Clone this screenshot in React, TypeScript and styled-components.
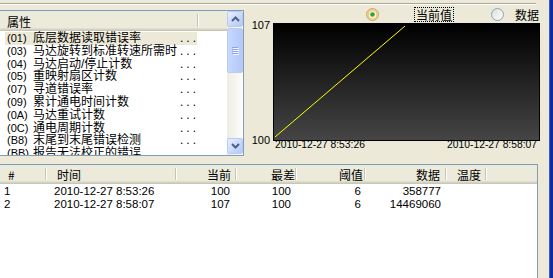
import React from 'react'
import styled, { createGlobalStyle } from 'styled-components'

const GlobalStyle = createGlobalStyle`
  html, body {
    margin: 0;
    padding: 0;
    background: #ece9d8;
  }

  body {
    font-family: "Noto Sans CJK SC", "Liberation Sans", sans-serif;
    font-size: 12px;
    color: #000;
  }
`

const CJK = '"Noto Sans CJK SC", "Liberation Sans", sans-serif'
const MIXED = '"Liberation Sans", "Noto Sans CJK SC", sans-serif'
const LATIN = '"Liberation Sans", Arial, sans-serif'

const properties = [
  { code: '(01)', name: '底层数据读取错误率' },
  { code: '(03)', name: '马达旋转到标准转速所需时' },
  { code: '(04)', name: '马达启动/停止计数' },
  { code: '(05)', name: '重映射扇区计数' },
  { code: '(07)', name: '寻道错误率' },
  { code: '(09)', name: '累计通电时间计数' },
  { code: '(0A)', name: '马达重试计数' },
  { code: '(0C)', name: '通电周期计数' },
  { code: '(B8)', name: '末尾到末尾错误检测' },
  { code: '(BB)', name: '报告无法校正的错误' },
]

const columns = [
  { title: '#', align: 'left', headPad: 8, cellPad: 4 },
  { title: '时间', align: 'left', headPad: 10, cellPad: 7 },
  { title: '当前', align: 'right', headPad: 6, cellPad: 7 },
  { title: '最差', align: 'right', headPad: 2, cellPad: 6 },
  { title: '阈值', align: 'right', headPad: 3, cellPad: 5 },
  { title: '数据', align: 'right', headPad: 7, cellPad: 6 },
  { title: '温度', align: 'left', headPad: 10, cellPad: 6 },
] as const

const colWidths = [47, 130, 60, 60, 69, 81, 40]

const records = [
  ['1', '2010-12-27 8:53:26', '100', '100', '6', '358777', ''],
  ['2', '2010-12-27 8:58:07', '107', '100', '6', '14469060', ''],
]

const Window = styled.div`
  width: 553px;
  height: 278px;
  overflow: hidden;
  display: grid;
  grid-template-columns: 549px 4px;
  background: #ece9d8;
`

const Body = styled.div`
  display: flex;
  flex-direction: column;
  padding-top: 3px;
  padding-right: 9px;
  min-width: 0;
`

const EdgeBar = styled.div`
  background: #0b2e9e;
  border-left: 1px solid #3a5fc8;
`

const Etch = styled.div`
  width: 536px;
  height: 0;
  border-top: 1px solid #aca899;
  border-bottom: 1px solid #ffffff;
`

const TopArea = styled.div`
  display: flex;
  gap: 6px;
  height: 152px;
`

/* ---------- property list ---------- */

const ListBox = styled.div`
  box-sizing: border-box;
  margin-top: 5px;
  width: 244px;
  height: 146px;
  border: 1px solid #7f9db9;
  border-left: none;
  background: #fff;
  display: grid;
  grid-template-columns: 1fr 16px;
  overflow: hidden;
`

const ListPane = styled.div`
  overflow: hidden;
  min-width: 0;
`

const HeaderBar = styled.div<{ $height: number }>`
  display: flex;
  height: ${p => p.$height}px;
  box-sizing: border-box;
  padding-top: 1px;
  background: linear-gradient(
    #ebeadb 0,
    #ebeadb calc(100% - 3px),
    #e2decd calc(100% - 3px),
    #e2decd calc(100% - 2px),
    #d6d2c2 calc(100% - 2px),
    #d6d2c2 calc(100% - 1px),
    #cbc7b8 calc(100% - 1px)
  );
  font-family: ${CJK};
  font-size: 12px;
`

const HeadCell = styled.div<{ $width: number; $align: string; $pad: number }>`
  position: relative;
  box-sizing: border-box;
  width: ${p => p.$width}px;
  flex: none;
  display: flex;
  align-items: center;
  justify-content: ${p => (p.$align === 'right' ? 'flex-end' : 'flex-start')};
  padding-left: ${p => (p.$align === 'left' ? p.$pad : 0)}px;
  padding-right: ${p => (p.$align === 'right' ? p.$pad : 0)}px;
  line-height: 14px;
  white-space: nowrap;

  &::after {
    content: '';
    position: absolute;
    right: 1px;
    top: 2px;
    bottom: 4px;
    width: 1px;
    background: #c7c5b2;
    box-shadow: 1px 0 0 #ffffff;
  }
`

const PropRows = styled.div`
  padding-top: 1px;
`

const PropRow = styled.div<{ $selected?: boolean }>`
  margin-left: 5px;
  width: 192px;
  height: 12.8px;
  box-sizing: border-box;
  padding-left: 2px;
  display: grid;
  grid-template-columns: 26px 145px 1fr;
  align-items: center;
  background: ${p => (p.$selected ? '#ece9d8' : 'transparent')};
  font-family: ${MIXED};
  font-size: 12px;
  line-height: 12.8px;
  white-space: nowrap;
`

const PropCode = styled.span`
  font-size: 11px;
`

const PropName = styled.span``

const PropDots = styled.span`
  padding-left: 2px;
  letter-spacing: 3px;
`

/* ---------- XP scrollbar ---------- */

const ScrollBar = styled.div`
  display: flex;
  flex-direction: column;
  background: linear-gradient(to right, #eeede5, #fdfdfa);
`

const ScrollButton = styled.div`
  box-sizing: border-box;
  height: 16px;
  margin: 0 0 1px;
  border: 1px solid #b9cbf3;
  border-radius: 2px;
  background: linear-gradient(135deg, #e8efff 0%, #c7d7fb 60%, #b4c8f6 100%);
  display: flex;
  align-items: center;
  justify-content: center;
`

const ScrollThumb = styled.div`
  box-sizing: border-box;
  height: 45px;
  border: 1px solid #b9cbf3;
  border-radius: 2px;
  background: linear-gradient(to right, #c9d8fc, #bcd0fb 50%, #b5c9f7);
  display: flex;
  align-items: center;
  justify-content: center;
`

const ScrollTrack = styled.div`
  flex: 1;
`

function Chevron({ up }: { up?: boolean }) {
  return (
    <svg width="9" height="6" viewBox="0 0 9 6">
      <path
        d={up ? 'M1 5 L4.5 1.5 L8 5' : 'M1 1 L4.5 4.5 L8 1'}
        fill="none"
        stroke="#4d6185"
        strokeWidth="2"
      />
    </svg>
  )
}

function Grip() {
  return (
    <svg width="7" height="8" viewBox="0 0 7 8">
      {[0, 2, 4, 6].map(y => (
        <g key={y}>
          <rect x="0" y={y} width="6" height="1" fill="#8ea6e2" />
          <rect x="1" y={y + 1} width="6" height="1" fill="#eef3ff" />
        </g>
      ))}
    </svg>
  )
}

/* ---------- chart ---------- */

const ChartPanel = styled.div`
  width: 290px;
  flex: none;
  display: flex;
  flex-direction: column;
`

const RadioRow = styled.div`
  height: 18px;
  display: flex;
  align-items: center;
  padding-left: 116px;
  font-family: ${CJK};
  font-size: 12px;
`

const RadioOption = styled.label<{ $gap: number; $after?: number }>`
  display: flex;
  align-items: center;
  gap: ${p => p.$gap}px;
  margin-right: ${p => p.$after ?? 0}px;
  line-height: 13px;
`

const RadioText = styled.span<{ $focused?: boolean }>`
  padding: 0 1px;
  outline: ${p => (p.$focused ? '1px dotted #000' : 'none')};
`

function RadioDot({ checked }: { checked?: boolean }) {
  const id = checked ? 'radioOn' : 'radioOff'
  return (
    <svg width="13" height="13" viewBox="0 0 13 13">
      <defs>
        <linearGradient id={id} x1="0" y1="0" x2="1" y2="1">
          <stop offset="0" stopColor="#dcdcd6" />
          <stop offset="1" stopColor="#ffffff" />
        </linearGradient>
      </defs>
      <circle cx="6.5" cy="6.5" r="6" fill={`url(#${id})`} stroke={checked ? '#c9a65a' : '#8fa1b8'} />
      {checked && <circle cx="6.5" cy="6.5" r="4.6" fill="none" stroke="#f7c15a" strokeWidth="1.4" />}
      {checked && <circle cx="6.5" cy="6.5" r="2.2" fill="#2fa42f" />}
    </svg>
  )
}

const PlotRow = styled.div`
  display: grid;
  grid-template-columns: 23px 267px;
  height: 115px;
`

const Axis = styled.div`
  display: flex;
  flex-direction: column;
  justify-content: space-between;
  align-items: flex-end;
  padding-right: 3px;
  margin: -4px 0 -5px;
  font-family: ${LATIN};
  font-size: 11px;
  line-height: 12px;
`

const Plot = styled.div`
  box-sizing: border-box;
  border: 1px solid #000;
  background: linear-gradient(#000000, #454545);
`

const DateRow = styled.div`
  display: flex;
  justify-content: space-between;
  padding: 1px 3px 0 25px;
  font-family: ${LATIN};
  font-size: 10.3px;
  line-height: 12px;
`

/* ---------- records list ---------- */

const RecordBox = styled.div`
  box-sizing: border-box;
  margin-top: 7px;
  width: 538px;
  flex: 1;
  border-top: 1px solid #7f9db9;
  border-right: 1px solid #7f9db9;
  background: #fff;
`

const RecordRows = styled.div`
  padding-top: 1px;
`

const RecordRow = styled.div`
  display: grid;
  grid-template-columns: ${colWidths.map(w => `${w}px`).join(' ')};
  height: 13px;
  font-family: ${MIXED};
  font-size: 11.5px;
  line-height: 13px;
  white-space: nowrap;
`

const Cell = styled.span<{ $align: string; $pad: number }>`
  text-align: ${p => p.$align};
  padding-left: ${p => (p.$align === 'left' ? p.$pad : 0)}px;
  padding-right: ${p => (p.$align === 'right' ? p.$pad : 0)}px;
`

export default function App() {
  return (
    <Window>
      <GlobalStyle />
      <Body>
        <Etch />
        <TopArea>
          <ListBox>
            <ListPane>
              <HeaderBar $height={20}>
                <HeadCell $width={199} $align="left" $pad={7}>属性</HeadCell>
              </HeaderBar>
              <PropRows>
                {properties.map((p, i) => (
                  <PropRow key={p.code} $selected={i === 0}>
                    <PropCode>{p.code}</PropCode>
                    <PropName>{p.name}</PropName>
                    <PropDots>...</PropDots>
                  </PropRow>
                ))}
              </PropRows>
            </ListPane>
            <ScrollBar>
              <ScrollButton><Chevron up /></ScrollButton>
              <ScrollThumb><Grip /></ScrollThumb>
              <ScrollTrack />
              <ScrollButton><Chevron /></ScrollButton>
            </ScrollBar>
          </ListBox>

          <ChartPanel>
            <RadioRow>
              <RadioOption $gap={36} $after={38}>
                <RadioDot checked />
                <RadioText $focused>当前值</RadioText>
              </RadioOption>
              <RadioOption $gap={10}>
                <RadioDot />
                <RadioText>数据</RadioText>
              </RadioOption>
            </RadioRow>
            <PlotRow>
              <Axis>
                <span>107</span>
                <span>100</span>
              </Axis>
              <Plot>
                <svg width="265" height="113" viewBox="0 0 265 113">
                  <line x1="1" y1="113" x2="131" y2="2" stroke="#ffff00" strokeWidth="1" />
                </svg>
              </Plot>
            </PlotRow>
            <DateRow>
              <span>2010-12-27 8:53:26</span>
              <span>2010-12-27 8:58:07</span>
            </DateRow>
          </ChartPanel>
        </TopArea>

        <RecordBox>
          <HeaderBar $height={19}>
            {columns.map((c, i) => (
              <HeadCell key={c.title} $width={colWidths[i]} $align={c.align} $pad={c.headPad}>
                {c.title}
              </HeadCell>
            ))}
          </HeaderBar>
          <RecordRows>
            {records.map(r => (
              <RecordRow key={r[0]}>
                {r.map((v, i) => (
                  <Cell key={i} $align={columns[i].align} $pad={columns[i].cellPad}>{v}</Cell>
                ))}
              </RecordRow>
            ))}
          </RecordRows>
        </RecordBox>
      </Body>
      <EdgeBar />
    </Window>
  )
}
